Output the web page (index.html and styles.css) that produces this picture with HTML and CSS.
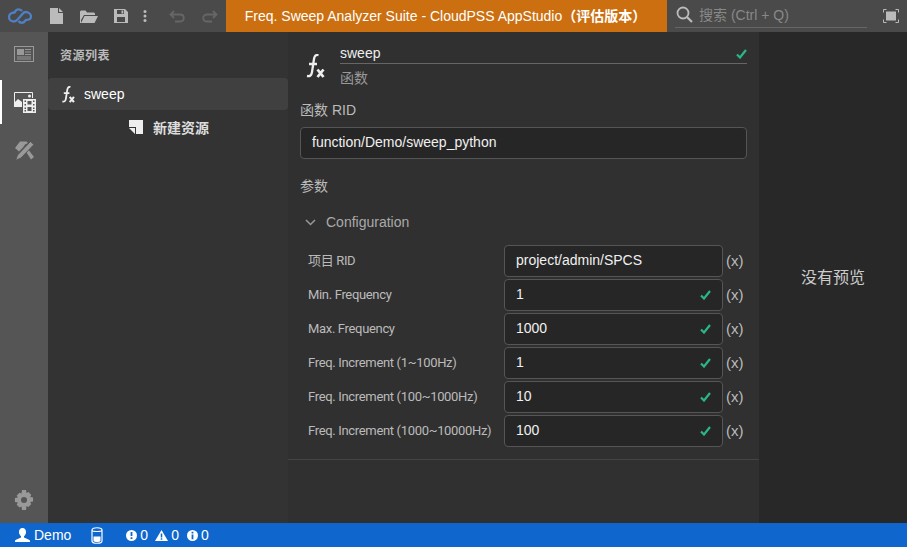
FILE: index.html
```html
<!DOCTYPE html>
<html lang="zh">
<head>
<meta charset="utf-8">
<title>Freq. Sweep Analyzer Suite</title>
<link rel="stylesheet" href="styles.css">
</head>
<body>
<div class="app">
  <header class="topbar">
    <div class="tools">
      <svg class="logo" width="24" height="16" viewBox="0 0 24 16" fill="none" stroke="#4f7fc4" stroke-width="2.300"><path d="M14 3C12 .8 9 .8 7.500 3L6.500 4.500C3 4.500 1 6.500 1 9 1 12 3.500 13.500 6 13.500 8 13.500 9 12 10 11L14 6.500C15 5 16 4 17.500 4 20.500 4 23 6 23 8.500 23 11 20.500 12 18 12L17 13C15.500 15.300 12 15.300 10.500 13"/></svg>
      <svg class="ico new" width="13" height="16" viewBox="0 0 13 16"><path fill="#bbb" d="M0 0h8v5h5v11H0zM9 0l4 4H9z"/></svg>
      <svg class="ico open" width="18" height="13" viewBox="0 0 18 13"><path fill="#bbb" d="M0 13V1.500L1 .5h4.500l1.500 2h7l1 1V5H4L1 10V13zM4.500 6H18l-3.500 7H1z"/></svg>
      <svg class="ico save" width="14" height="14" viewBox="0 0 14 14"><path fill="#bbb" fill-rule="evenodd" d="M0 0h11l3 3v11H0zM3 1v4h7V1zM7.500 1.500h1.800v3H7.500zM3 8v5h8V8z"/></svg>
      <svg class="ico more" width="4" height="12" viewBox="0 0 4 12"><g fill="#bbb"><circle cx="2" cy="1.500" r="1.500"/><circle cx="2" cy="6" r="1.500"/><circle cx="2" cy="10.500" r="1.500"/></g></svg>
      <svg class="ico undo" width="16" height="13" viewBox="0 0 16 13" fill="none" stroke="#666" stroke-width="1.800"><path d="M5 1L1.500 4.500 5 8M2 4.500h9c5 0 5 7 0 7H6"/></svg>
      <svg class="ico redo" width="16" height="13" viewBox="0 0 16 13" fill="none" stroke="#666" stroke-width="1.800"><path d="M11 1l3.500 3.500L11 8M14 4.500H5c-5 0-5 7 0 7h5"/></svg>
    </div>
    <div class="title">Freq. Sweep Analyzer Suite - CloudPSS AppStudio<b>（评估版本）</b></div>
    <div class="search">
      <div class="search-box">
        <svg width="17" height="17" viewBox="0 0 17 17" fill="none" stroke="#bbb" stroke-width="1.800"><circle cx="7" cy="7" r="5.500"/><path d="M11 11l5 5" stroke-width="2.200"/></svg>
        <span>搜索 (Ctrl + Q)</span>
      </div>
      <svg class="fullscreen" width="16" height="14" viewBox="0 0 16 14"><path fill="none" stroke="#bbb" d="M.5 3.500v-3h3M12.500.5h3v3M15.500 10.500v3h-3M3.500 13.500h-3v-3"/><rect x="3" y="2.500" width="10" height="9" fill="#bbb"/></svg>
    </div>
  </header>

  <div class="body">
    <nav class="rail">
      <div class="rail-top">
        <div class="rail-item">
          <svg width="20" height="16" viewBox="0 0 20 16"><rect x=".5" y=".5" width="19" height="15" fill="none" stroke="#999"/><rect x="3" y="3" width="7" height="6" fill="#999"/><path stroke="#999" d="M11 3.500h6M11 6h6M11 8.500h6M3 11h14M3 13h14"/></svg>
        </div>
        <div class="rail-item active">
          <svg width="22" height="21" viewBox="0 0 22 21"><path fill="none" stroke="#eee" d="M.5 14V.5h18V6"/><path fill="#eee" d="M0 15V11l4-4 4 3v5z"/><circle cx="15.500" cy="4" r="1.500" fill="#eee"/><path fill="#eee" fill-rule="evenodd" d="M9 7h13v14H9zM10.500 8.500v1.500h1.500V8.500zM19 8.500v1.500h1.500V8.500zM10.500 12v1.500h1.500V12zM19 12v1.500h1.500V12zM10.500 15.500V17h1.500v-1.500zM19 15.500V17h1.500v-1.500zM10.500 18v1.500h1.500V18zM19 18v1.500h1.500V18zM13.500 9v3.500h4V9zM13.500 15v4h4v-4z"/></svg>
        </div>
        <div class="rail-item">
          <svg width="21" height="21" viewBox="0 0 21 21" fill="#999"><path d="M1 8L6 1.500h6.500L14 3l-3 1.500-2 3-4 4z"/><path d="M10 8.500l2-2 8 10.500-3 2.500z"/><path d="M16.500 1.500l3.500 3L7 18l-5.500 2.500L3.500 15z" stroke="#555"/></svg>
        </div>
      </div>
      <div class="rail-item gear">
        <svg width="20" height="20" viewBox="0 0 20 20"><path fill="#999" fill-rule="evenodd" d="M8 0h4l.5 3 2-.9 2.800 2.800-1.200 2.100 3 .5v4l-3 .5 1.200 2.100-2.800 2.800-2-.9L12 20H8l-.5-3.400-2 .9-2.800-2.800 1.200-2.100-3-.5v-4l3-.5-1.200-2.100 2.800-2.800 2 .9zM10 7a3 3 0 100 6 3 3 0 000-6z"/></svg>
      </div>
    </nav>

    <aside class="side">
      <h2 class="side-title">资源列表</h2>
      <div class="res-item">
        <svg class="fx-small" width="14" height="17" viewBox="0 0 20 24"><path fill="none" stroke="#eee" stroke-width="2.600" d="M13.500 1C10.500 .5 9.500 2 9 5L7 18C6.500 21.500 5 22.500 2 22M4 10h8"/><path fill="none" stroke="#eee" stroke-width="3" d="M12.500 15.500l6 7.500M18.500 15.500l-6 7.500"/></svg>
        <span>sweep</span>
      </div>
      <div class="res-new">
        <svg width="14" height="14" viewBox="0 0 14 14"><path fill="#eee" d="M0 0h14v14H7V7H0zM0 8h6v6z"/></svg>
        <span>新建资源</span>
      </div>
    </aside>

    <main class="main">
      <div class="content">
        <div class="head">
          <svg class="fx-big" width="20" height="24" viewBox="0 0 20 24"><path fill="none" stroke="#eee" stroke-width="2.300" d="M13.500 1C10.500 .5 9.500 2 9 5L7 18C6.500 21.500 5 22.500 2 22M4 10h8"/><path fill="none" stroke="#eee" stroke-width="2.800" d="M12.500 15.500l6 7.500M18.500 15.500l-6 7.500"/></svg>
          <div class="head-fields">
            <div class="name-row"><span>sweep</span><svg class="chk" width="11" height="10" viewBox="0 0 11 10"><path fill="none" stroke="#2bb58a" stroke-width="2.200" d="M1 5.500l3 3L10 1"/></svg></div>
            <div class="type">函数</div>
          </div>
        </div>
        <label class="field-label">函数 RID</label>
        <div class="input wide">function/Demo/sweep_python</div>
        <div class="section">参数</div>
        <div class="group">
          <svg width="11" height="7" viewBox="0 0 11 7"><path fill="none" stroke="#999" stroke-width="1.500" d="M1 1l4.500 4.500L10 1"/></svg>
          <span>Configuration</span>
        </div>
        <div class="rows">
          <div class="row"><label>项目 RID</label><div class="input">project/admin/SPCS</div><span class="x">(x)</span></div>
          <div class="row"><label>Min. Frequency</label><div class="input">1<svg class="chk" width="11" height="10" viewBox="0 0 11 10"><path fill="none" stroke="#2bb58a" stroke-width="2.200" d="M1 5.500l3 3L10 1"/></svg></div><span class="x">(x)</span></div>
          <div class="row"><label>Max. Frequency</label><div class="input">1000<svg class="chk" width="11" height="10" viewBox="0 0 11 10"><path fill="none" stroke="#2bb58a" stroke-width="2.200" d="M1 5.500l3 3L10 1"/></svg></div><span class="x">(x)</span></div>
          <div class="row"><label>Freq. Increment (1~100Hz)</label><div class="input">1<svg class="chk" width="11" height="10" viewBox="0 0 11 10"><path fill="none" stroke="#2bb58a" stroke-width="2.200" d="M1 5.500l3 3L10 1"/></svg></div><span class="x">(x)</span></div>
          <div class="row"><label>Freq. Increment (100~1000Hz)</label><div class="input">10<svg class="chk" width="11" height="10" viewBox="0 0 11 10"><path fill="none" stroke="#2bb58a" stroke-width="2.200" d="M1 5.500l3 3L10 1"/></svg></div><span class="x">(x)</span></div>
          <div class="row"><label>Freq. Increment (1000~10000Hz)</label><div class="input">100<svg class="chk" width="11" height="10" viewBox="0 0 11 10"><path fill="none" stroke="#2bb58a" stroke-width="2.200" d="M1 5.500l3 3L10 1"/></svg></div><span class="x">(x)</span></div>
        </div>
      </div>
    </main>

    <section class="preview">没有预览</section>
  </div>

  <footer class="status">
    <span class="st user">
      <svg width="15" height="14" viewBox="0 0 15 14"><path fill="#fff" d="M7.500 0C10 0 11 2 11 4c0 2-1 3.500-2 4.200V9.500l5 2.200c.6.300 1 .800 1 1.300v1H0v-1c0-.5.400-1 1-1.300l5-2.200V8.200C5 7.500 4 6 4 4c0-2 1-4 3.500-4z"/></svg>Demo</span>
    <span class="st db">
      <svg width="12" height="17" viewBox="0 0 12 17"><path fill="none" stroke="#fff" stroke-width="1.200" d="M1 3c0-3 10-3 10 0v11c0 3-10 3-10 0zM1 3c0 2 10 2 10 0"/><path fill="#fff" d="M2.500 9.500h7v4.500c-1 1.300-6 1.300-7 0z"/></svg>
    </span>
    <span class="st"><svg width="11" height="11" viewBox="0 0 11 11"><circle cx="5.500" cy="5.500" r="5.500" fill="#fff"/><path stroke="#0f66cc" stroke-width="1.800" d="M5.500 2v4M5.500 7.300v1.800"/></svg>0</span>
    <span class="st warn"><svg width="13" height="11" viewBox="0 0 13 11"><path fill="#fff" d="M6.500 0L13 11H0z"/><path stroke="#0f66cc" stroke-width="1.500" d="M6.500 3.500v4M6.500 8.200v1.600"/></svg>0</span>
    <span class="st"><svg width="11" height="11" viewBox="0 0 11 11"><circle cx="5.500" cy="5.500" r="5.500" fill="#fff"/><path stroke="#0f66cc" stroke-width="1.800" d="M5.500 1.800v1.700M5.500 4.500v4.700"/></svg>0</span>
  </footer>
</div>
</body>
</html>
```

FILE: styles.css
```css
* { box-sizing: border-box; }
html, body { margin: 0; height: 100%; }
body {
  font-family: "Liberation Sans", "Noto Sans CJK SC", sans-serif;
  font-size: 14px;
  color: #eee;
  background: #333;
  overflow: hidden;
}
.app { display: flex; flex-direction: column; width: 907px; height: 547px; }

.topbar { display: flex; height: 32px; background: #4a4a4a; flex: none; }
.tools { width: 226px; display: flex; align-items: center; padding-left: 8px; }
.tools svg { display: block; flex: none; }
.logo { margin-right: 18px; }
.ico.open { margin-left: 17px; }
.ico.save { margin-left: 16px; }
.ico.more { margin-left: 15px; }
.ico.undo { margin-left: 22px; }
.ico.redo { margin-left: 17px; }
.title {
  width: 441px;
  background: #cb6f10;
  color: #fff;
  text-align: center;
  line-height: 32px;
  padding-right: 2px;
  white-space: nowrap;
}
.title b { font-weight: 700; }
.search { flex: 1; display: flex; align-items: flex-start; padding-left: 8px; }
.search-box {
  width: 192px; height: 28px;
  display: flex; align-items: center; gap: 6px;
  border-bottom: 1px solid #666;
  color: #888;
  padding: 1px 0 0 1px;
}
.fullscreen { margin: 9px 0 0 16px; }

.body { flex: 1; display: flex; min-height: 0; }
.rail {
  width: 48px; flex: none; background: #555;
  display: flex; flex-direction: column; justify-content: space-between;
}
.rail-item { height: 44px; display: flex; align-items: center; justify-content: center; }
.rail-item.active { border-left: 2px solid #fff; padding-right: 1px; }
.rail-top { display: flex; flex-direction: column; gap: 4px; }
.gear { height: 46px; }

.side { width: 240px; flex: none; background: #333; font-weight: 700; }
.side-title { margin: 0; padding: 16px 12px 0; font-size: 12px; letter-spacing: .5px; line-height: 17px; color: #bbb; font-weight: 700; }
.res-item {
  margin-top: 13px; height: 32px; border-radius: 4px; background: #404040;
  display: flex; align-items: center; padding-left: 13px; font-weight: 400; color: #fff;
}
.res-item span { margin-left: 9px; }
.fx-small { flex: none; }
.res-new { display: flex; align-items: center; justify-content: center; height: 34px; gap: 10px; padding-left: 2px; color: #ddd; font-size: 14px; }

.main { width: 471px; flex: none; background: #303030; }
.content { height: 428px; border-bottom: 1px solid #444; padding: 13px 12px 0; }
.head { display: flex; height: 43px; }
.fx-big { flex: none; margin: 9px 15px 0 5px; }
.head-fields { flex: 1; }
.name-row { display: flex; justify-content: space-between; align-items: center; height: 19px; border-bottom: 1px solid #666; color: #eee; }
.name-row span { margin-top: -2px; }
.type { margin-top: 5px; font-size: 14px; line-height: 18px; color: #999; }
.field-label { display: block; margin-top: 12px; line-height: 20px; color: #bbb; font-size: 14px; }
.input {
  position: relative;
  height: 32px; line-height: 28px; padding: 0 11px;
  background: #262626; border: 1px solid #555; border-radius: 4px;
  color: #f0f0f0; white-space: nowrap;
}
.input .chk { position: absolute; right: 11px; top: 10px; }
.input.wide { margin-top: 7px; }
.section { margin-top: 17px; line-height: 20px; color: #bbb; }
.group { display: flex; align-items: center; margin-top: 16px; height: 20px; padding-left: 5px; gap: 10px; color: #aaa; }
.rows { margin-top: 13px; padding-left: 8px; display: flex; flex-direction: column; gap: 2px; }
.row { display: flex; align-items: center; height: 32px; }
.row label { width: 196px; font-family: Roboto, "Noto Sans CJK SC", sans-serif; font-size: 13px; line-height: 16px; letter-spacing: -.33px; color: #bbb; white-space: nowrap; }
.row .input { width: 219px; }
.x { margin-left: 3px; margin-bottom: 2px; color: #bbb; font-size: 15px; }

.preview { flex: 1; background: #282828; display: flex; align-items: center; justify-content: center; color: #ccc; font-size: 16px; padding-bottom: 4px; }

.status {
  height: 24px; flex: none; background: #0f66cc; color: #fff;
  display: flex; align-items: center; padding-left: 15px;
}
.st { display: flex; align-items: center; gap: 3px; margin-right: 7px; }
.st.warn { margin-right: 8px; }
.user { gap: 4px; margin-right: 20px; }
.db { margin-right: 23px; }
```
